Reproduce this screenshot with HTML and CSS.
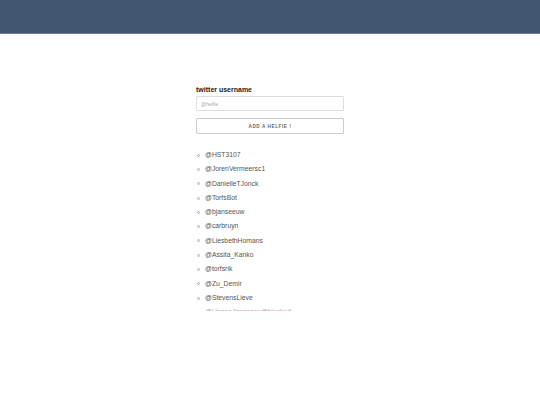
FILE: index.html
```html
<!DOCTYPE html>
<html>
<head>
<meta charset="utf-8">
<link rel="stylesheet" href="styles.css">
</head>
<body>
<header class="topbar"></header>
<main class="main">
  <div class="form">
    <label class="label">twitter username</label>
    <input class="input" type="text" placeholder="@helfie">
    <button class="button">ADD A HELFIE !</button>
    <ul class="list">
      <li>@HST3107</li>
      <li>@JorenVermeersc1</li>
      <li>@DanielleTJonck</li>
      <li>@TorfsBot</li>
      <li>@bjanseeuw</li>
      <li>@carbruyn</li>
      <li>@LiesbethHomans</li>
      <li>@Assita_Kanko</li>
      <li>@torfsrik</li>
      <li>@Zu_Demir</li>
      <li>@StevensLieve</li>
      <li class="muted">@HannaJanssens@blocked</li>
    </ul>
  </div>
</main>
</body>
</html>
```
FILE: styles.css
```css
html, body { margin: 0; padding: 0; background: #fff; }
body { font-family: "Liberation Sans", Arial, sans-serif; }
.topbar {
  height: 33px;
  background: #415670;
  border-bottom: 1px solid #707d90;
}
.main { display: flex; justify-content: center; }
.form {
  width: 148px;
  margin-top: 51px;
  display: flex;
  flex-direction: column;
}
.label {
  font-size: 7px;
  line-height: 9px;
  font-weight: bold;
  color: #222;
}
.input {
  margin: 2px 0 0;
  box-sizing: border-box;
  height: 15px;
  width: 100%;
  border: 1px solid #ddd;
  border-radius: 1px;
  padding: 0 4px;
  font-family: inherit;
  font-size: 5px;
  color: #444;
  outline: none;
}
.input::placeholder { color: #aaa; }
.button {
  margin-top: 7px;
  box-sizing: border-box;
  height: 16px;
  width: 100%;
  background: #fff;
  border: 1px solid #ccc;
  border-radius: 1px;
  font-family: inherit;
  font-size: 4.6px;
  font-weight: bold;
  letter-spacing: 0.6px;
  color: #666;
  padding: 0;
}
.list {
  margin: 14px 0 0;
  padding: 0;
  list-style: none;
  height: 163px;
  overflow: hidden;
  font-size: 6.8px;
  line-height: 14.3px;
  color: #555;
}
.list li {
  display: flex;
  align-items: center;
  height: 14.3px;
}
.list li::before {
  content: "";
  box-sizing: border-box;
  width: 3px;
  height: 3px;
  margin-left: 1px;
  margin-right: 5px;
  border: 0.8px solid #aaa;
  border-radius: 50%;
  flex: none;
}
.list .muted { color: #c9a0a8; }
.list .muted::before { border-color: #d8c0c4; }
```
